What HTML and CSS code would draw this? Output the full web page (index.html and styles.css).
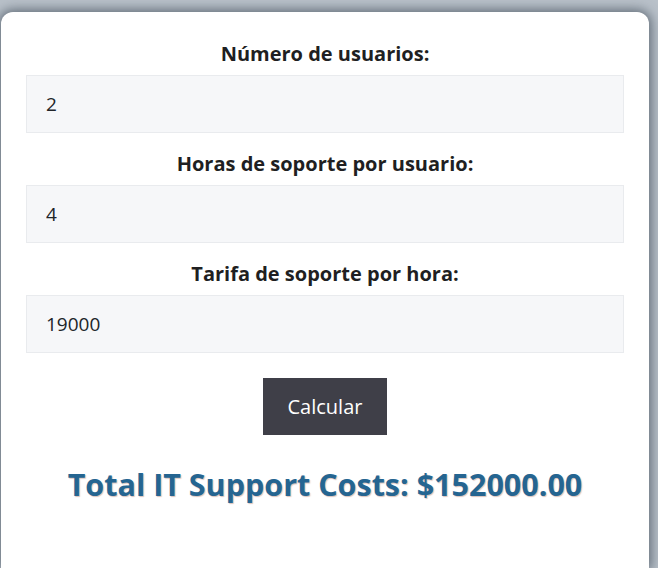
FILE: index.html
```html
<!DOCTYPE html>
<html lang="es">
<head>
<meta charset="utf-8">
<title>IT Support Costs</title>
<link rel="stylesheet" href="styles.css">
</head>
<body>
<div class="card">
  <form class="calc">
    <label class="field-label" for="users">Número de usuarios:</label>
    <input class="field-input" id="users" type="text" value="2">
    <label class="field-label" for="hours">Horas de soporte por usuario:</label>
    <input class="field-input" id="hours" type="text" value="4">
    <label class="field-label" for="rate">Tarifa de soporte por hora:</label>
    <input class="field-input" id="rate" type="text" value="19000">
    <button class="calc-btn" type="button">Calcular</button>
  </form>
  <h2 class="result">Total IT Support Costs: $152000.00</h2>
</div>
</body>
</html>
```
FILE: styles.css
```css
html, body {
  margin: 0;
  padding: 0;
}
body {
  background: #b9c1c9;
  font-family: "Open Sans", "Noto Sans", sans-serif;
  color: #212529;
  padding: 12px 9px 0 1px;
  height: 568px;
  box-sizing: border-box;
  overflow: hidden;
}
.card {
  background: #fff;
  border-radius: 12px 12px 0 0;
  box-shadow: 0 0 12px 2px rgba(60, 72, 86, 0.75);
  padding: 28px 25px 0;
  height: 100%;
  box-sizing: border-box;
}
.calc {
  display: flex;
  flex-direction: column;
  align-items: stretch;
}
.field-label {
  font-weight: 700;
  font-size: 20px;
  line-height: 28px;
  text-align: center;
  margin: 0 0 7px;
  color: #1f1f22;
}
.field-input {
  font-family: inherit;
  font-size: 19px;
  color: #212529;
  background: #f6f7f9;
  border: 1px solid #e9ebee;
  height: 58px;
  box-sizing: border-box;
  padding: 0 19px;
  margin-bottom: 17px;
  outline: none;
}
.calc-btn {
  align-self: center;
  margin-top: 8px;
  width: 124px;
  height: 57px;
  background: #3f3f48;
  color: #fff;
  border: none;
  font-family: inherit;
  font-size: 20px;
}
.result {
  margin: 29px 0 0;
  text-align: center;
  font-size: 30.5px;
  line-height: 40px;
  font-weight: 700;
  color: #256591;
  text-shadow: 1px 1px 1px rgba(150, 80, 60, 0.35);
}
```
